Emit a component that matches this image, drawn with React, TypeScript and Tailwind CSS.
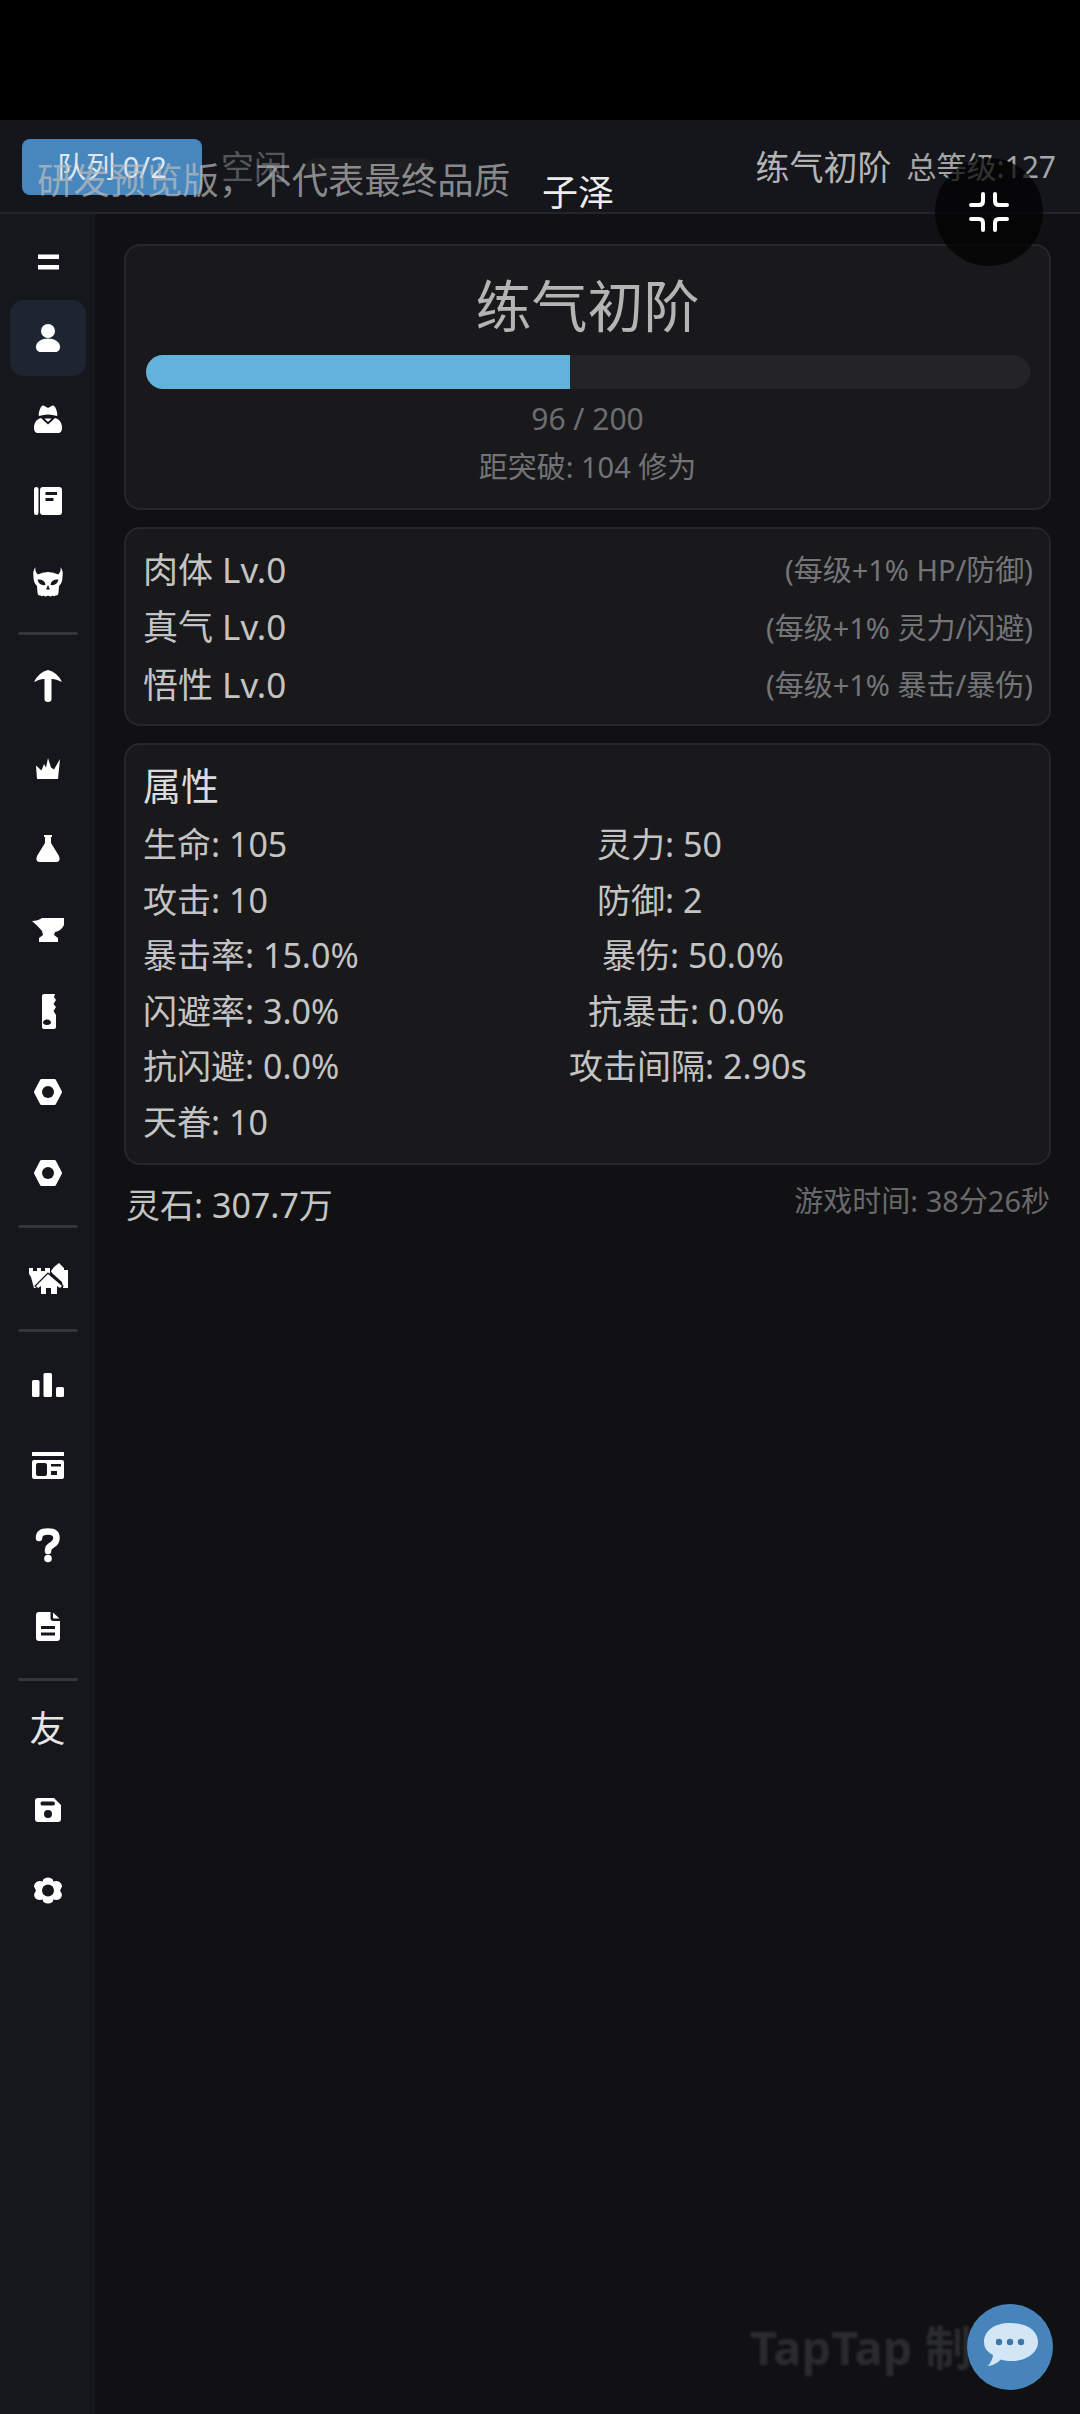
import React from "react";

const D = "#15171c";
const Svg = ({ children }: { children: React.ReactNode }) => (
  <svg viewBox="0 0 48 48" className="w-12 h-12" fill="#fff">{children}</svg>
);

const icons: Record<string, React.ReactNode> = {
  menu: <Svg><rect x="14" y="16.5" width="21" height="4.5" /><rect x="14" y="27" width="21" height="4.5" /></Svg>,
  user: <Svg><circle cx="24" cy="17" r="7" /><path d="M12 33C12 27.5 18 24.5 24 24.5C30 24.5 36 27.5 36 33C36 36.5 34 38 31 38H17C14 38 12 36.5 12 33Z" /></Svg>,
  spy: <Svg><path d="M15 21Q14 19 16 14Q17.5 10 19.5 10.5L24 13L28.5 10.5Q30.5 10 32 14Q34 19 33 21Q24 18 15 21Z" /><path d="M10 33C10 27 13 24 17 23L24 29.5L31 23C35 24 38 27 38 33C38 37 36 38 34 38H14C12 38 10 37 10 33Z" /><path d="M20.5 23.5H27.5L24 27Z" /></Svg>,
  book: <Svg><rect x="10" y="11" width="4.5" height="28" rx="2.2" /><path fillRule="evenodd" d="M19 11H35Q38 11 38 14V36Q38 39 35 39H19Q16 39 16 36V14Q16 11 19 11ZM21.5 16V19H33V16ZM21.5 22V25H29.5V22Z" /></Svg>,
  skull: <Svg><path fillRule="evenodd" d="M11.5 10Q10.5 15 14 17.5Q18 15 24 15Q30 15 34 17.5Q37.5 15 36.5 10Q39.5 14 38.5 20Q38.5 26 35 29L34.5 36Q34 39 31.5 38.5Q30 40 28.5 38.5Q26.5 40.5 24 38.5Q21.5 40.5 19.5 38.5Q18 40 16.5 38.5Q14 39 13.5 36L13 29Q9.5 26 9.5 20Q8.5 14 11.5 10ZM13.5 22.5Q15 29 21.5 28Q21 22 13.5 22.5ZM34.5 22.5Q27 22 26.5 28Q33 29 34.5 22.5ZM24 28L22 32.5H26Z" /></Svg>,
  pick: <Svg><path d="M24 8Q33 10 38 20Q31 16.5 27.5 17V37Q27.5 40 24 40Q20.5 40 20.5 37V17Q17 16.5 10 20Q15 10 24 8Z" /></Svg>,
  crown: <Svg><path d="M13 36L12 22.5L17.5 27.5L20 21L22 24.5L24 15L27 24.5L30 26.5L36 16L34 36Z" /></Svg>,
  flask: <Svg><path d="M20 11H28V13H27V19L35 32Q37 38 32 38H16Q11 38 13 32L21 19V13H20Z" /></Svg>,
  anvil: <Svg><path d="M8 16Q14 16 18 13H40V20Q37 26 31 27L30 30L34 33V37H15V33L19 30L18 26Q14 21 8 16Z" /></Svg>,
  saw: <Svg><path fillRule="evenodd" d="M20 8H31L30 11L32 14L29.5 18L32 21L29.5 25L32 29V41Q32 43 30 43H20Q18 43 18 41V10Q18 8 20 8ZM23 33.5C20.5 33.5 19 35 19 36.5C19 38 20.5 39 23 39C25.5 39 27 38 27 36.5C27 35 25.5 33.5 23 33.5Z" /></Svg>,
  nut: <Svg><path fill="#fff" stroke="#fff" strokeWidth="3" strokeLinejoin="round" d="M11.5 25L17.5 13.5H30.5L36.5 25L30.5 36.5H17.5Z" /><circle cx="24" cy="25" r="6" fill={D} /></Svg>,
  castle: <Svg><path d="M5 15H9V18H13V15H17V18H21V15H26V20L14 32V35H10Q8 28 7 24L5 21Z" /><path d="M35 10L40 15V17H44V35H39L38 29L28 20L27 18L30 14Z" /><path stroke={D} strokeWidth="2.5" style={{ paintOrder: "stroke" }} d="M24 21L38 33L36 35L33 33V41H27V35H22V41H17V33L14 35L12 33Z" /></Svg>,
  chart: <Svg><rect x="8" y="22" width="7.5" height="17" rx="1.5" /><rect x="19.5" y="15" width="8.5" height="24" rx="1.5" /><rect x="32" y="29" width="8" height="10" rx="1.5" /></Svg>,
  card: <Svg><rect x="8" y="13" width="32" height="4" rx="0.5" /><path fillRule="evenodd" d="M10 21H38Q40 21 40 23V38Q40 40 38 40H10Q8 40 8 38V23Q8 21 10 21ZM14 24Q12 24 12 26V35Q12 37 14 37H21Q23 37 23 35V26Q23 24 21 24ZM27 25V27.5H37V25ZM27 32V36H33V32Z" /></Svg>,
  help: <Svg><path d="M15 18Q15 11.5 24 11.5Q32.5 11.5 32.5 18Q32.5 22.5 28 25Q24 27 24 31" fill="none" stroke="#fff" strokeWidth="6.5" strokeLinecap="round" /><circle cx="24" cy="38.5" r="3.8" /></Svg>,
  doc: <Svg><path fillRule="evenodd" d="M15 11H26.5V17Q26.5 20 29.5 20H36V37Q36 40 33 40H15Q12 40 12 37V14Q12 11 15 11ZM17 25V28H31V25ZM17 31.5V34.5H31V31.5Z" /><path d="M29 11.5L35.5 17.5H30Q29 17.5 29 16.5Z" /></Svg>,
  save: <Svg><path fillRule="evenodd" d="M14 14H30L37 21V35Q37 38 34 38H14Q11 38 11 35V17Q11 14 14 14ZM18 17.5Q16.5 17.5 16.5 19.5Q16.5 21.5 18 21.5H29Q31 21.5 31 19.5Q31 17.5 29 17.5ZM24 26A4 4 0 1 0 24 34A4 4 0 1 0 24 26Z" /></Svg>,
  gear: <Svg><path d="M19.5 14Q24 11 28.5 14L29.5 16.5L32.5 16Q37.5 16.5 38 21.5L36 25.5L38 29.5Q37.5 34.5 32.5 35L29.5 34.5L28.5 37Q24 40 19.5 37L18.5 34.5L15.5 35Q10.5 34.5 10 29.5L12 25.5L10 21.5Q10.5 16.5 15.5 16L18.5 16.5Z" /><circle cx="24" cy="25.5" r="6" fill={D} /></Svg>,
};

const Item = ({ k, active, small }: { k: string; active?: boolean; small?: boolean }) => (
  <div className={`flex items-center justify-center rounded-[14px] w-[76px] ${small ? "h-[66px]" : "h-[76px]"} ${active ? "bg-[#1e2530]" : ""}`}>
    {icons[k]}
  </div>
);

const Divider = ({ cls = "my-[8px]" }: { cls?: string }) => <div className={`w-[60px] h-[3px] bg-[#33353b] rounded-full ${cls}`} />;

const cardCls = "bg-[#19191c] border-2 border-[#25272b] rounded-[16px]";

const levels = [
  ["肉体 Lv.0", "(每级+1% HP/防御)"],
  ["真气 Lv.0", "(每级+1% 灵力/闪避)"],
  ["悟性 Lv.0", "(每级+1% 暴击/暴伤)"],
];

const attrs = [
  { a: "生命: 105", b: "灵力: 50", pl: "pl-[28px]" },
  { a: "攻击: 10", b: "防御: 2", pl: "pl-[28px]" },
  { a: "暴击率: 15.0%", b: "暴伤: 50.0%", pl: "pl-[33px]" },
  { a: "闪避率: 3.0%", b: "抗暴击: 0.0%", pl: "pl-[19px]" },
  { a: "抗闪避: 0.0%", b: "攻击间隔: 2.90s", pl: "pl-0" },
  { a: "天眷: 10", b: "", pl: "pl-0" },
];

export default function App() {
  return (
    <div className="relative w-[1080px] h-[2414px] overflow-hidden bg-[#111113] font-['Noto_Sans','Noto_Sans_CJK_SC',sans-serif]">
      <div className="h-[120px] bg-black" />
      <header className="h-[94px] bg-[#14161b] border-b-2 border-[#23252a] flex items-start pt-[19px] pl-[22px] pr-[24px]">
        <div className="w-[180px] h-[56px] rounded-[8px] bg-[#4787bd] flex items-center justify-center text-[29px] text-[#dfe8f0]">队列 0/2</div>
        <div className="ml-[19px] mt-[8px] leading-[40px] text-[33px] text-[#555659]">空闲</div>
        <div className="ml-[18px] mt-[19px] w-[128px] h-[20px] rounded-full bg-[#1e1e20]" />
        <div className="ml-auto mt-[8px] flex items-center leading-[40px]">
          <span className="text-[34px] text-[#b4b4b4]">练气初阶</span>
          <span className="ml-[15px] text-[30px] text-[#a5a5a5]">总等级:127</span>
        </div>
      </header>
      <div className="flex h-[2200px]">
        <aside className="w-[95px] shrink-0 bg-[#15171c] pt-[15px] flex flex-col items-center gap-[5px]">
          <Item k="menu" small />
          <Item k="user" active />
          <Item k="spy" />
          <Item k="book" />
          <Item k="skull" />
          <Divider />
          <Item k="pick" />
          <Item k="crown" />
          <Item k="flask" />
          <Item k="anvil" />
          <Item k="saw" />
          <Item k="nut" />
          <Item k="nut" />
          <Divider cls="mt-[10px] mb-[6px]" />
          <Item k="castle" />
          <Divider cls="mt-[9px] mb-[7px]" />
          <Item k="chart" />
          <Item k="card" />
          <Item k="help" />
          <Item k="doc" />
          <Divider cls="mt-[10px] mb-[6px]" />
          <div className="h-[73px] flex items-center justify-center text-[36px] text-[#e6e6e6]">友</div>
          <Item k="save" />
          <Item k="gear" />
        </aside>
        <main className="w-[956px] pl-[29px] pt-[30px]">
          <section className={`${cardCls} h-[266px] px-[20px] flex flex-col items-center`}>
            <div className="mt-[25px] h-[68px] leading-[68px] text-[56px] text-[#b4b4b4]">练气初阶</div>
            <div className="mt-[16px] w-[884px] h-[34px] rounded-full bg-[#242426] overflow-hidden">
              <div className="h-full w-[48%] bg-[#62b2dc]" />
            </div>
            <div className="mt-[12px] h-[36px] leading-[36px] text-[30px] text-[#6c6d70]">96 / 200</div>
            <div className="mt-[12px] h-[36px] leading-[36px] text-[29px] text-[#727376]">距突破: 104 修为</div>
          </section>

          <section className={`${cardCls} mt-[17px] h-[199px] pl-[17px] pr-[16px] pt-[12px]`}>
            {levels.map(([l, r]) => (
              <div key={l} className="flex items-center justify-between h-[57.5px]">
                <span className="text-[35px] text-[#c4c4c4]">{l}</span>
                <span className="text-[29px] text-[#747578]">{r}</span>
              </div>
            ))}
          </section>

          <section className={`${cardCls} mt-[17px] h-[422px] pl-[17px] pt-[17px]`}>
            <div className="h-[46px] leading-[46px] text-[38px] text-[#dcdcdc]">属性</div>
            <div className="mt-[9px]">
              {attrs.map((r) => (
                <div key={r.a} className="flex items-center h-[55.5px] text-[34px] text-[#c4c4c4]">
                  <div className="w-[426px]">{r.a}</div>
                  <div className={r.pl}>{r.b}</div>
                </div>
              ))}
            </div>
          </section>

          <div className="mt-[16px] flex justify-between w-[926px] pl-[2px]">
            <span className="mt-[1px] h-[46px] leading-[46px] text-[34px] text-[#c4c4c4]">灵石: 307.7万</span>
            <span className="h-[40px] leading-[40px] text-[29px] text-[#68696c]">游戏时间: 38分26秒</span>
          </div>
        </main>
      </div>

      {/* overlays */}
      <div className="absolute left-[37px] top-[158px] leading-[44px] text-[36.4px] text-[#bdbdbd]/70 whitespace-nowrap">研发预览版，不代表最终品质</div>
      <div className="absolute left-[542px] top-[171px] leading-[44px] text-[36px] text-[#ececec]">子泽</div>
      <div className="absolute left-[935px] top-[158px] w-[108px] h-[108px] rounded-full bg-black/70 flex items-center justify-center">
        <svg viewBox="0 0 40 40" className="w-10 h-10" fill="none" stroke="#fff" strokeWidth="4" strokeLinecap="round">
          <path d="M2 13H10Q14 13 14 9V2" />
          <path d="M38 13H30Q26 13 26 9V2" />
          <path d="M2 27H10Q14 27 14 31V38" />
          <path d="M38 27H30Q26 27 26 31V38" />
        </svg>
      </div>
      <div className="absolute left-[750px] top-[2320px] leading-[54px] text-[47px] font-bold text-[#2a2b2e] blur-[1px] whitespace-nowrap">TapTap 制造</div>
      <div className="absolute left-[967px] top-[2304px] w-[86px] h-[86px] rounded-full bg-[#4684bb] flex items-center justify-center">
        <svg viewBox="0 0 86 86" className="w-[86px] h-[86px]">
          <path d="M43 19C60 19 71 27 71 38C71 49 59 57 45 57C41 57 37 56.5 34 55.5C29 60 24 62 21 62C24 58 26 54 26 51C19 47 17 43 17 38C17 27 27 19 43 19Z" fill="#d3e6f6" />
          <circle cx="32" cy="38" r="3.2" fill="#3d76a8" />
          <circle cx="43" cy="38" r="3.2" fill="#3d76a8" />
          <circle cx="54" cy="38" r="3.2" fill="#3d76a8" />
        </svg>
      </div>
    </div>
  );
}
